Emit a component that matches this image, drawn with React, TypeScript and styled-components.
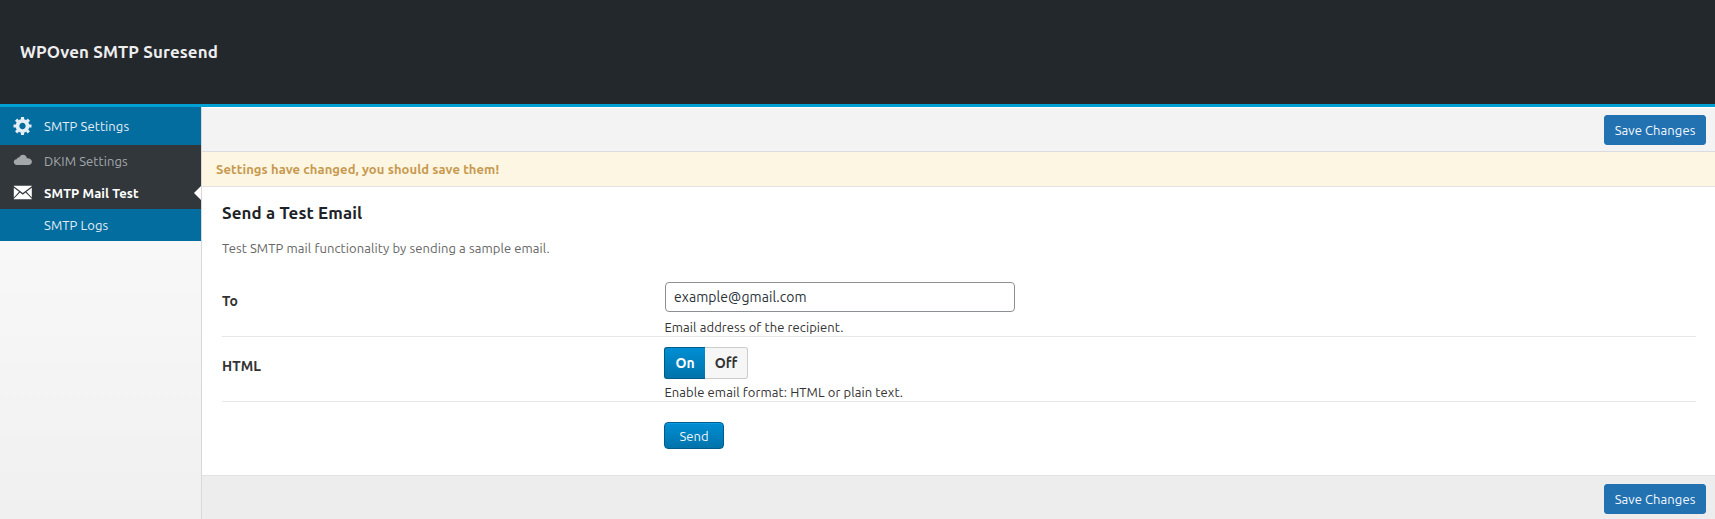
import React from "react";
import styled, { createGlobalStyle } from "styled-components";

const GlobalStyle = createGlobalStyle`
  * { box-sizing: border-box; }
  body {
    margin: 0;
    background: #fff;
    color: #333;
    font-family: Ubuntu, "Noto Sans", sans-serif;
    font-size: 13px;
    line-height: 18px;
    letter-spacing: 0.09px;
    overflow: hidden;
  }
  h1, h2, p { margin: 0; }
`;

const Page = styled.div`
  display: flex;
  flex-direction: column;
  height: 519px;
`;

const Header = styled.header`
  display: flex;
  align-items: center;
  height: 107px;
  padding: 0 20px;
  background: #23282d;
  border-bottom: 3px solid #00a0d2;
`;

const Title = styled.h1`
  color: #eee;
  font-size: 16.9px;
  font-weight: 700;
  line-height: 24px;
  letter-spacing: 0.12px;
`;

const Body = styled.div`
  display: flex;
  flex: 1;
  min-height: 0;
`;

const Sidebar = styled.nav`
  width: 202px;
  border-right: 1px solid #d8d8d8;
  background: linear-gradient(#fcfcfc, #f0f0f0);
`;

type Tone = "parent" | "muted" | "active" | "link";

const tones: Record<Tone, { bg: string; fg: string; weight: number }> = {
  parent: { bg: "#036d9f", fg: "#e4eef4", weight: 400 },
  muted: { bg: "#32373c", fg: "#a3a7aa", weight: 400 },
  active: { bg: "#32373c", fg: "#fff", weight: 700 },
  link: { bg: "#046da0", fg: "#e1edf3", weight: 400 },
};

const NavItem = styled.a<{ $tone: Tone; $tall?: boolean }>`
  position: relative;
  display: flex;
  align-items: center;
  height: ${(p) => (p.$tall ? 38 : 32)}px;
  padding-left: 13px;
  background: ${(p) => tones[p.$tone].bg};
  color: ${(p) => tones[p.$tone].fg};
  font-weight: ${(p) => tones[p.$tone].weight};
`;

const IconSlot = styled.span`
  display: flex;
  width: 31px;
  flex: none;

  svg { display: block; fill: currentColor; }
`;

const Pointer = styled.span`
  position: absolute;
  right: 0;
  top: 9px;
  border: 7px solid transparent;
  border-left-width: 0;
  border-right-color: #fff;
`;

const Main = styled.main`
  display: flex;
  flex-direction: column;
  flex: 1;
`;

const ActionBar = styled.div<{ $footer?: boolean }>`
  display: flex;
  justify-content: flex-end;
  height: ${(p) => (p.$footer ? 44 : 45)}px;
  padding: ${(p) => (p.$footer ? 8 : 7)}px 9px 0 0;
  background: ${(p) => (p.$footer ? "#ededed" : "#f3f3f3")};
  border-top: 1px solid ${(p) => (p.$footer ? "#e3e3e3" : "#fff")};
  border-bottom: ${(p) => (p.$footer ? "none" : "1px solid #dcdcde")};
`;

const SaveButton = styled.button`
  width: 102px;
  height: 30px;
  padding: 0;
  border: 1px solid #2271b1;
  border-radius: 3px;
  background: #2271b1;
  color: #f3f8fc;
  font: inherit;
  letter-spacing: 0.08px;
`;

const Notice = styled.p`
  height: 35px;
  padding-left: 14px;
  border-bottom: 1px solid #e3e3e3;
  background: #fdf6e3;
  color: #c79a50;
  font-weight: 700;
  line-height: 35px;
`;

const Panel = styled.section`
  flex: 1;
  padding: 14px 19px 0 20px;
`;

const Heading = styled.h2`
  color: #1d2327;
  font-size: 16.9px;
  font-weight: 700;
  line-height: 24px;
  letter-spacing: 0.13px;
`;

const Lead = styled.p`
  margin-top: 14px;
  color: #666;
`;

const Field = styled.div<{ $height: number; $top: number; $line?: boolean }>`
  display: grid;
  grid-template-columns: 442px 1fr;
  align-items: start;
  height: ${(p) => p.$height}px;
  padding-top: ${(p) => p.$top}px;
  border-bottom: ${(p) => (p.$line ? "1px solid #e7e7e7" : "none")};
`;

const Label = styled.label<{ $top: number }>`
  padding-top: ${(p) => p.$top}px;
  font-size: 14px;
  font-weight: 700;
  line-height: 20px;
`;

const Input = styled.input`
  display: block;
  width: 350px;
  height: 30px;
  margin-left: 1px;
  padding: 0 8px;
  border: 1px solid #8c8f94;
  border-radius: 4px;
  background: #fff;
  color: #2c3338;
  font: inherit;
  font-size: 14px;
  letter-spacing: 0.07px;
`;

const Description = styled.p<{ $top: number }>`
  margin-top: ${(p) => p.$top}px;
  padding-left: 0.4px;
`;

const Switch = styled.div`
  display: flex;
  height: 32px;
`;

const Option = styled.button<{ $on?: boolean }>`
  width: ${(p) => (p.$on ? 41 : 43)}px;
  padding: 0;
  border: 1px solid ${(p) => (p.$on ? "#005a87" : "#ccc")};
  ${(p) => (p.$on ? "border-right" : "border-left")}: 0;
  border-radius: ${(p) => (p.$on ? "3px 0 0 3px" : "0 3px 3px 0")};
  background: ${(p) => (p.$on ? "linear-gradient(#008ed4, #0073aa)" : "#f6f6f6")};
  color: ${(p) => (p.$on ? "#fff" : "#333")};
  font: inherit;
  font-size: 14px;
  font-weight: 700;
`;

const SendButton = styled.button`
  width: 60px;
  height: 27px;
  padding: 0;
  border: 1px solid #005c8a;
  border-radius: 4px;
  background: linear-gradient(#008ed4, #0073aa);
  box-shadow: inset 0 1px 0 #0a9be0;
  color: #eef6fb;
  font: inherit;
`;

const GearIcon = () => (
  <svg width="19" height="18" viewBox="1 2 17 17">
    <path d="M18 12h-2.18c-.17.7-.44 1.35-.81 1.93l1.54 1.54-2.1 2.1-1.54-1.54c-.58.36-1.23.63-1.91.79V19H8v-2.18c-.68-.16-1.33-.43-1.91-.79l-1.54 1.54-2.12-2.12 1.54-1.54c-.36-.58-.63-1.23-.79-1.91H1V9.03h2.17c.16-.7.44-1.35.8-1.94L2.43 5.55l2.1-2.1 1.54 1.54c.58-.37 1.24-.64 1.93-.81V2h3v2.18c.68.16 1.33.43 1.91.79l1.54-1.54 2.12 2.12-1.54 1.54c.36.59.64 1.24.8 1.94H18V12zm-8.5 1.5c1.66 0 3-1.34 3-3s-1.34-3-3-3-3 1.34-3 3 1.34 3 3 3z" />
  </svg>
);

const CloudIcon = () => (
  <svg width="19" height="14" viewBox="0 0 19 14">
    <path d="M4 11C2 11 .8 9.800.8 8.100.8 6.500 1.900 5.400 3.600 5.300 4 4 5.100 3.400 6.200 3.500 6.800 1.800 8.200.7 9.900.7c2.200 0 3.800 1.500 4 3.600 2.900-.1 5 1.300 5 3.500 0 1.900-1.300 3.200-3.500 3.200z" />
  </svg>
);

const MailIcon = () => (
  <svg width="19" height="17" viewBox="0 0 19 17">
    <path d="M.8.800h18v.4L9.800 8 .8 1.200z" />
    <path d="M.8 2.700v9.900l5.300-5.900zM18.800 2.700v9.900l-5.300-5.900zM.8 14.200h18v-.4l-6.200-6.200-2.800 2.100-2.800-2.100-6.200 6.200z" />
  </svg>
);

export default function App() {
  return (
    <Page>
      <GlobalStyle />
      <Header>
        <Title>WPOven SMTP Suresend</Title>
      </Header>
      <Body>
        <Sidebar>
          <NavItem $tone="parent" $tall>
            <IconSlot><GearIcon /></IconSlot>
            SMTP Settings
          </NavItem>
          <NavItem $tone="muted">
            <IconSlot><CloudIcon /></IconSlot>
            DKIM Settings
          </NavItem>
          <NavItem $tone="active">
            <IconSlot><MailIcon /></IconSlot>
            SMTP Mail Test
            <Pointer />
          </NavItem>
          <NavItem $tone="link">
            <IconSlot />
            SMTP Logs
          </NavItem>
        </Sidebar>
        <Main>
          <ActionBar>
            <SaveButton>Save Changes</SaveButton>
          </ActionBar>
          <Notice>Settings have changed, you should save them!</Notice>
          <Panel>
            <Heading>Send a Test Email</Heading>
            <Lead>Test SMTP mail functionality by sending a sample email.</Lead>
            <Field $height={80} $top={25} $line>
              <Label $top={9} htmlFor="recipient">To</Label>
              <div>
                <Input id="recipient" defaultValue="example@gmail.com" />
                <Description $top={6}>Email address of the recipient.</Description>
              </div>
            </Field>
            <Field $height={65} $top={10} $line>
              <Label $top={9}>HTML</Label>
              <div>
                <Switch>
                  <Option $on>On</Option>
                  <Option>Off</Option>
                </Switch>
                <Description $top={4}>Enable email format: HTML or plain text.</Description>
              </div>
            </Field>
            <Field $height={60} $top={20}>
              <span />
              <div>
                <SendButton>Send</SendButton>
              </div>
            </Field>
          </Panel>
          <ActionBar $footer>
            <SaveButton>Save Changes</SaveButton>
          </ActionBar>
        </Main>
      </Body>
    </Page>
  );
}
